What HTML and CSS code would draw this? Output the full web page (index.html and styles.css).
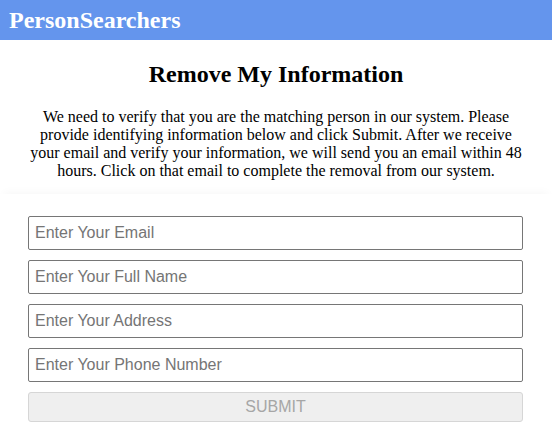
FILE: index.html
```html
<!DOCTYPE html>
<html>
<head>
<meta charset="utf-8">
<link rel="stylesheet" href="styles.css">
</head>
<body>
<header class="topbar"><span class="brand">PersonSearchers</span></header>
<section class="intro">
<h1 class="title">Remove My Information</h1>
<p class="desc">We need to verify that you are the matching person in our system. Please provide identifying information below and click Submit. After we receive your email and verify your information, we will send you an email within 48 hours. Click on that email to complete the removal from our system.</p>
</section>
<form class="form">
<input class="field" type="text" placeholder="Enter Your Email">
<input class="field" type="text" placeholder="Enter Your Full Name">
<input class="field" type="text" placeholder="Enter Your Address">
<input class="field" type="text" placeholder="Enter Your Phone Number">
<button class="submit" type="button" disabled>SUBMIT</button>
</form>
</body>
</html>
```
FILE: styles.css
```css
html, body { margin: 0; padding: 0; background: #fff; }
body { font-family: "Liberation Serif", "Times New Roman", serif; color: #000; }
.topbar { background: #6495ed; height: 40px; display: flex; align-items: center; padding: 0 9px; }
.brand { color: #fff; font-weight: bold; font-size: 24px; }
.intro { padding: 20px 30px 14px; text-align: center; }
.title { font-size: 24px; margin: 0 0 20px; line-height: 28px; }
.desc { font-size: 16px; line-height: 18px; margin: 0; }
.form { display: flex; flex-direction: column; gap: 10px; padding: 22px 29px 0 28px; box-shadow: 0 -6px 8px -4px rgba(0,0,0,0.03); }
.field { box-sizing: border-box; height: 34px; border: 1px solid #767676; border-radius: 2px; padding: 0 6px; font-family: "Liberation Sans", Arial, sans-serif; font-size: 16px; margin: 0; }
.field::placeholder { color: #757575; }
.submit { box-sizing: border-box; height: 30px; border: 1px solid #d6d6d6; border-radius: 3px; background: #efefef; color: #a6a6a6; font-family: "Liberation Sans", Arial, sans-serif; font-size: 16px; margin: 0; }
```
